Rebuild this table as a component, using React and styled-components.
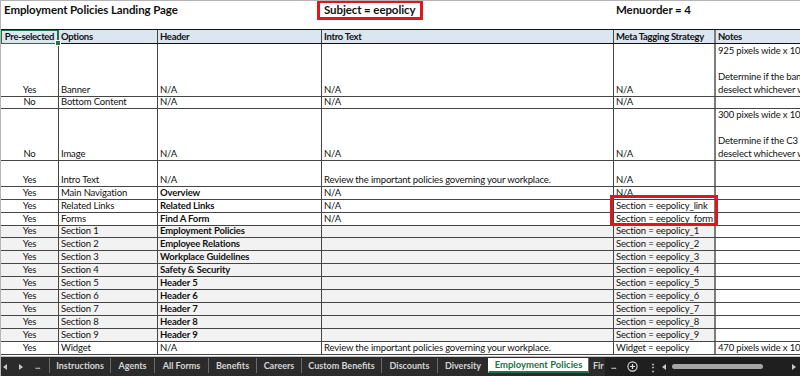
import React from 'react';
import styled, { createGlobalStyle } from 'styled-components';

const Global = createGlobalStyle`
  html, body { margin: 0; padding: 0; background: #fff; overflow: hidden; }
  body { font-family: Lato, "Liberation Sans", sans-serif; color: #111; }
  #root { width: 800px; height: 376px; }
`;

const COLS = '58px 99px 164px 292px 102px 1fr';
const LINE = '#454545';

const Page = styled.div`
  position: relative;
  width: 800px;
  height: 376px;
  box-sizing: border-box;
  border-top: 1px solid #b4b4b4;
  border-left: 1px solid #b4b4b4;
  display: flex;
  flex-direction: column;
  overflow: hidden;
`;

const TitleRow = styled.div`
  display: grid;
  grid-template-columns: ${COLS};
  height: 29px;
  flex: none;
  box-sizing: border-box;
  border-bottom: 1px solid #111;
  align-items: start;
`;

const Title = styled.div`
  grid-column: ${p => p.$span || 'auto'};
  font-size: 11.5px;
  letter-spacing: -0.1px;
  font-weight: 700;
  line-height: 18px;
  padding-left: ${p => p.$pad ?? 3}px;
  white-space: nowrap;
`;

const SubjectBox = styled.div`
  justify-self: start;
  margin-left: -5px;
  margin-top: -1px;
  height: 20px;
  box-sizing: border-box;
  border: 3px solid #e3141b;
  padding: 0 5px 0 4px;
  font-size: 11.5px;
  letter-spacing: -0.1px;
  font-weight: 700;
  line-height: 14px;
  white-space: nowrap;
`;

const Row = styled.div`
  display: grid;
  grid-template-columns: ${COLS};
  height: ${p => p.$h}px;
  flex: none;
  box-sizing: border-box;
  border-bottom: 1px solid ${p => p.$dark ? '#111' : LINE};
  background: ${p => p.$bg || 'transparent'};
`;

const Cell = styled.div`
  display: flex;
  align-items: flex-end;
  justify-content: ${p => p.$center ? 'center' : 'flex-start'};
  padding: 0 2px;
  overflow: hidden;
  white-space: pre;
  border-right: ${p => p.$edge ? '2px solid #7d7d7d' : `1px solid ${LINE}`};
  background: ${p => p.$shade ? '#f2f2f2' : 'transparent'};
  font-size: 9.5px;
  letter-spacing: -0.15px;
  line-height: 12px;
  font-weight: ${p => p.$bold ? 700 : 400};
`;

const NoteCell = styled(Cell)`
  border-right: none;
  line-height: 13px;
  background: transparent;
`;

const HeadCell = styled(Cell)`
  font-weight: 700;
  padding-left: 2px;
  letter-spacing: -0.3px;
`;

const NoteHead = styled(NoteCell)`
  font-weight: 700;
  letter-spacing: -0.3px;
`;

const Gap = styled.div`
  height: 2px;
  flex: none;
  box-sizing: border-box;
  border-bottom: 1px solid #c4c4c4;
`;

const TabBar = styled.div`
  height: 19px;
  flex: none;
  display: flex;
  background: #2b2b2b;
  font-family: Lato, "Open Sans", sans-serif;
  font-size: 9px;
  font-weight: 700;
  color: #d6d6d6;
  overflow: hidden;
`;

const Nav = styled.div`
  width: 48px;
  flex: none;
  display: flex;
  align-items: center;
  padding-left: 2px;
  box-sizing: border-box;
  gap: 12px;
  color: #c8c8c8;
`;

const Dots = styled.span`
  font-size: 9px;
  letter-spacing: -0.5px;
  line-height: 10px;
  margin-top: -2px;
`;

const Tabs = styled.div`
  display: flex;
  height: 16px;
  flex: none;
`;

const Tab = styled.div`
  width: ${p => p.$w}px;
  flex: none;
  box-sizing: border-box;
  display: flex;
  align-items: center;
  justify-content: ${p => p.$left ? 'flex-start' : 'center'};
  padding-left: ${p => p.$left ? 4 : 0}px;
  white-space: nowrap;
  overflow: hidden;
  border-left: 1px solid ${p => p.$active ? 'transparent' : '#6a6a6a'};
  margin-top: 1px;
  background: ${p => p.$active ? '#fff' : 'transparent'};
  color: ${p => p.$active ? '#217346' : '#d6d6d6'};
  border-bottom: ${p => p.$active ? '2px solid #217346' : 'none'};
  font-size: ${p => p.$active ? 9.5 : 9}px;
`;

const Tools = styled.div`
  flex: 1;
  background: #1f1f1f;
  display: flex;
  align-items: center;
  padding-left: 6px;
`;

const More = styled.span`
  width: 16px;
  font-size: 9px;
  letter-spacing: -0.5px;
  margin-top: -3px;
`;

const Kebab = styled.span`
  width: 12px;
  margin-left: 10px;
  font-size: 10px;
  line-height: 10px;
`;

const Scroll = styled.div`
  flex: 1;
  display: flex;
  align-items: center;
  gap: 4px;
  padding-right: 4px;
  padding-left: 2px;
`;

const Thumb = styled.div`
  width: 91px;
  height: 5px;
  border-radius: 3px;
  background: #a6a6a6;
  margin-left: 2px;
`;

const ScrollSpace = styled.div`
  flex: 1;
`;

const RedBox = styled.div`
  position: absolute;
  left: 609px;
  top: 194px;
  width: 108px;
  height: 31px;
  box-sizing: border-box;
  border: 3px solid #e3141b;
  pointer-events: none;
`;

const Selection = styled.div`
  position: absolute;
  left: 0;
  top: 29px;
  width: 58px;
  height: 14px;
  box-sizing: border-box;
  border: 1px solid #217346;
  border-right-width: 2px;
  pointer-events: none;
  &::after {
    content: '';
    position: absolute;
    right: -4px;
    bottom: -3px;
    width: 4px;
    height: 4px;
    background: #217346;
    border: 1px solid #fff;
  }
`;

const Tri = ({ dir }) => (
  <svg width="4" height="6" viewBox="0 0 4 6">
    <path d={dir === 'l' ? 'M4 0 L0 3 L4 6 Z' : 'M0 0 L4 3 L0 6 Z'} fill="#c8c8c8" />
  </svg>
);

const PlusCircle = () => (
  <svg width="11" height="11" viewBox="0 0 11 11">
    <circle cx="5.5" cy="5.5" r="4.6" fill="none" stroke="#e0e0e0" strokeWidth="1.1" />
    <path d="M5.5 3 V8 M3 5.5 H8" stroke="#e0e0e0" strokeWidth="1.2" />
  </svg>
);

const REVIEW = 'Review the important policies governing your workplace.';

const rows = [
  { h: 53, pre: 'Yes', opt: 'Banner', hdr: 'N/A', intro: 'N/A', meta: 'N/A',
    notes: '925 pixels wide x 100 pixels high\n\nDetermine if the banner is needed, otherwise\ndeselect whichever will not be used.' },
  { h: 12, pre: 'No', opt: 'Bottom Content', hdr: 'N/A', intro: 'N/A', meta: 'N/A', notes: '' },
  { h: 52, pre: 'No', opt: 'Image', hdr: 'N/A', intro: 'N/A', meta: 'N/A',
    notes: '300 pixels wide x 100 pixels high\n\nDetermine if the C3 content is needed, otherwise\ndeselect whichever will not be used.' },
  { h: 26, pre: 'Yes', opt: 'Intro Text', hdr: 'N/A', intro: REVIEW, meta: 'N/A', notes: '' },
  { h: 13, pre: 'Yes', opt: 'Main Navigation', hdr: 'Overview', bold: true, intro: 'N/A', meta: 'N/A', notes: '' },
  { h: 13, pre: 'Yes', opt: 'Related Links', hdr: 'Related Links', bold: true, intro: 'N/A', meta: 'Section = eepolicy_link', notes: '' },
  { h: 13, pre: 'Yes', opt: 'Forms', hdr: 'Find A Form', bold: true, intro: 'N/A', meta: 'Section = eepolicy_form', notes: '' },
  { h: 12, pre: 'Yes', opt: 'Section 1', hdr: 'Employment Policies', bold: true, intro: '', meta: 'Section = eepolicy_1', shade: true },
  { h: 13, pre: 'Yes', opt: 'Section 2', hdr: 'Employee Relations', bold: true, intro: '', meta: 'Section = eepolicy_2', shade: true },
  { h: 13, pre: 'Yes', opt: 'Section 3', hdr: 'Workplace Guidelines', bold: true, intro: '', meta: 'Section = eepolicy_3', shade: true },
  { h: 13, pre: 'Yes', opt: 'Section 4', hdr: 'Safety & Security', bold: true, intro: '', meta: 'Section = eepolicy_4', shade: true },
  { h: 13, pre: 'Yes', opt: 'Section 5', hdr: 'Header 5', bold: true, intro: '', meta: 'Section = eepolicy_5', shade: true },
  { h: 13, pre: 'Yes', opt: 'Section 6', hdr: 'Header 6', bold: true, intro: '', meta: 'Section = eepolicy_6', shade: true },
  { h: 13, pre: 'Yes', opt: 'Section 7', hdr: 'Header 7', bold: true, intro: '', meta: 'Section = eepolicy_7', shade: true },
  { h: 13, pre: 'Yes', opt: 'Section 8', hdr: 'Header 8', bold: true, intro: '', meta: 'Section = eepolicy_8', shade: true },
  { h: 13, pre: 'Yes', opt: 'Section 9', hdr: 'Header 9', bold: true, intro: '', meta: 'Section = eepolicy_9', shade: true },
  { h: 13, pre: 'Yes', opt: 'Widget', hdr: 'N/A', intro: REVIEW, meta: 'Widget = eepolicy',
    notes: '470 pixels wide x 100 pixels high' },
];

const tabs = [
  { name: 'Instructions', w: 61 },
  { name: 'Agents', w: 44 },
  { name: 'All Forms', w: 54 },
  { name: 'Benefits', w: 48 },
  { name: 'Careers', w: 45 },
  { name: 'Custom Benefits', w: 80 },
  { name: 'Discounts', w: 56 },
  { name: 'Diversity', w: 51 },
  { name: 'Employment Policies', w: 100, active: true },
  { name: 'Fir', w: 17, left: true },
];

export default function App() {
  return (
    <>
      <Global />
      <Page>
        <TitleRow>
          <Title $span="1 / 4">Employment Policies Landing Page</Title>
          <SubjectBox>Subject = eepolicy</SubjectBox>
          <Title $pad={2}>Menuorder = 4</Title>
        </TitleRow>
        <Row $h={14} $dark $bg="#dce6f1">
          <HeadCell $center>Pre-selected</HeadCell>
          <HeadCell>Options</HeadCell>
          <HeadCell>Header</HeadCell>
          <HeadCell>Intro Text</HeadCell>
          <HeadCell $edge>Meta Tagging Strategy</HeadCell>
          <NoteHead>Notes</NoteHead>
        </Row>
        {rows.map((r, i) => (
          <Row key={i} $h={r.h}>
            <Cell $center $shade={r.shade}>{r.pre}</Cell>
            <Cell $shade={r.shade}>{r.opt}</Cell>
            <Cell $shade={r.shade} $bold={r.bold}>{r.hdr}</Cell>
            <Cell $shade={r.shade}>{r.intro}</Cell>
            <Cell $shade={r.shade} $edge>{r.meta}</Cell>
            <NoteCell>{r.notes}</NoteCell>
          </Row>
        ))}
        <Gap />
        <TabBar>
          <Nav>
            <Tri dir="l" />
            <Tri dir="r" />
            <Dots>...</Dots>
          </Nav>
          <Tabs>
            {tabs.map(t => (
              <Tab key={t.name} $w={t.w} $active={t.active} $left={t.left}>{t.name}</Tab>
            ))}
          </Tabs>
          <Tools>
            <More>...</More>
            <PlusCircle />
            <Kebab>⋮</Kebab>
            <Scroll>
              <Tri dir="l" />
              <Thumb />
              <ScrollSpace />
              <Tri dir="r" />
            </Scroll>
          </Tools>
        </TabBar>
        <Selection />
        <RedBox />
      </Page>
    </>
  );
}
